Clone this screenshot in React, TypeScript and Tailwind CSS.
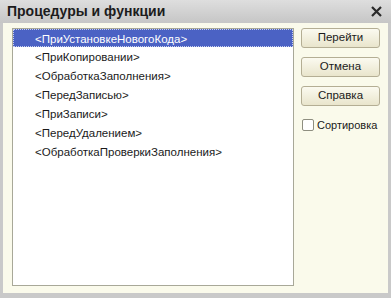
import React from 'react';

const items = [
  '<ПриУстановкеНовогоКода>',
  '<ПриКопировании>',
  '<ОбработкаЗаполнения>',
  '<ПередЗаписью>',
  '<ПриЗаписи>',
  '<ПередУдалением>',
  '<ОбработкаПроверкиЗаполнения>',
];

function DialogButton({ label }: { label: string }) {
  return (
    <button className="h-[20px] w-[79px] rounded-[3px] border border-[#b4ae94] bg-gradient-to-b from-[#fbfaf0] to-[#e9e5cc] text-[11.5px] leading-none text-[#1b1b1b]">
      {label}
    </button>
  );
}

export default function App() {
  return (
    <div
      className="flex h-[298px] w-[391px] flex-col bg-[#c9c9c9]"
      style={{ fontFamily: '"Liberation Sans", Arial, sans-serif' }}
    >
      {/* title bar */}
      <div className="flex h-[23px] shrink-0 items-center justify-between bg-gradient-to-b from-[#dedede] to-[#c6c6c6] pl-[7px] pr-[9px]">
        <span className="text-[14px] font-bold text-[#1c1c1c]">Процедуры и функции</span>
        <svg width="11" height="11" viewBox="0 0 11 11">
          <path d="M1 1 L10 10 M10 1 L1 10" stroke="#2a2a2a" strokeWidth="2.2" />
        </svg>
      </div>

      {/* body */}
      <div className="mx-[3px] mb-[5px] flex flex-1 bg-[#fafaeb] pl-[9px] pt-[5px] pb-[7px]">
        <div className="h-[258px] w-[282px] border border-[#a8a898] bg-white">
          {items.map((item, i) => (
            <div
              key={item}
              className={
                i === 0
                  ? 'flex h-[18px] items-center border border-dotted border-[#c8d0f0] bg-[#4b62c4] pl-[21px] pt-[3px] text-[11.5px] text-white'
                  : 'flex h-[19px] items-center pl-[22px] pt-[3px] text-[11.5px] text-[#1a1a1a]'
              }
            >
              {item}
            </div>
          ))}
        </div>

        <div className="ml-[7px] flex flex-col">
          <div className="flex flex-col gap-[9px]">
            <DialogButton label="Перейти" />
            <DialogButton label="Отмена" />
            <DialogButton label="Справка" />
          </div>
          <label className="mt-[11px] ml-[1px] flex items-center gap-[3px] text-[11px] text-[#1a1a1a]">
            <span className="h-[12px] w-[12px] rounded-[2px] border border-[#8e8e80] bg-white" />
            Сортировка
          </label>
        </div>
      </div>
    </div>
  );
}
